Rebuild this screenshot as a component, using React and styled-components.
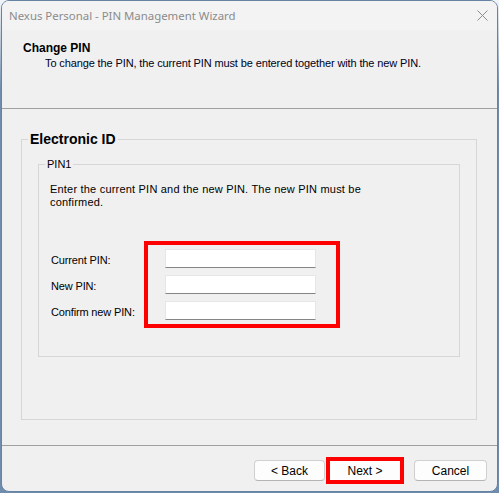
import React from 'react';
import styled, { createGlobalStyle } from 'styled-components';

const Global = createGlobalStyle`
  html, body { margin: 0; padding: 0; }
  body {
    width: 499px;
    height: 493px;
    overflow: hidden;
    background: linear-gradient(#f2f5f8 0px, #c9d5e1 30px, #6f8cad 90px);
  }
  #root { width: 499px; height: 493px; }
`;

const Window = styled.div`
  box-sizing: border-box;
  margin-left: 1px;
  width: 497px;
  height: 492px;
  border: 1px solid #6683a3;
  border-radius: 8px;
  background: #f0f0f0;
  overflow: hidden;
  display: flex;
  flex-direction: column;
  font-family: "Liberation Sans", Arial, sans-serif;
  color: #000;
`;

const TitleBar = styled.div`
  flex: none;
  height: 29px;
  display: flex;
  align-items: center;
  justify-content: space-between;
  padding-left: 7px;
  background: #f3f3f3;
  font-family: "Noto Sans", "Open Sans", sans-serif;
  font-size: 11.4px;
  color: #8b8b8b;
`;

const CloseButton = styled.div`
  width: 30px;
  height: 29px;
  display: flex;
  align-items: center;
  justify-content: center;
`;

const Header = styled.div`
  flex: none;
  box-sizing: border-box;
  height: 79px;
  padding: 11px 0 0 21px;
  border-bottom: 1px solid #a0a0a0;
`;

const HeaderTitle = styled.div`
  font-size: 12px;
  font-weight: bold;
  line-height: 14px;
`;

const HeaderText = styled.div`
  margin-top: 2px;
  padding-left: 22px;
  font-size: 11px;
  line-height: 13px;
  letter-spacing: -0.12px;
  color: #000018;
`;

const Body = styled.div`
  flex: 1;
  padding-top: 22px;
`;

const Group = styled.fieldset`
  box-sizing: border-box;
  margin: ${(p) => p.$margin};
  padding: 0;
  height: ${(p) => p.$height}px;
  ${(p) => (p.$width ? `width: ${p.$width}px;` : '')}
  border: 1px solid #d6d6d6;
  min-inline-size: 0;
`;

const Legend = styled.legend`
  margin-left: 6px;
  padding: 0 2px;
  font-size: ${(p) => (p.$big ? 14 : 11)}px;
  font-weight: ${(p) => (p.$big ? 'bold' : 'normal')};
  line-height: ${(p) => (p.$big ? 16 : 14)}px;
`;

const Description = styled.p`
  margin: 12px 0 0 11px;
  max-width: 330px;
  font-size: 11px;
  line-height: 13px;
  letter-spacing: 0.2px;
`;

const FieldsRow = styled.div`
  display: flex;
  margin-top: 32px;
  padding-left: 12px;
`;

const Labels = styled.div`
  width: 93px;
  padding-top: 10px;
  display: flex;
  flex-direction: column;
  gap: 7px;
`;

const Label = styled.div`
  height: 19px;
  font-size: 11px;
  line-height: 19px;
  letter-spacing: -0.15px;
`;

const Highlight = styled.div`
  border: 4px solid #ff0000;
  padding: 4px 20px 4px 17px;
  display: flex;
  flex-direction: column;
  gap: 7px;
`;

const Input = styled.div`
  box-sizing: border-box;
  width: 151px;
  height: 19px;
  background: #fff;
  border: 1px solid #e6e6e6;
  border-bottom-color: #858585;
`;

const Footer = styled.div`
  flex: none;
  box-sizing: border-box;
  height: 46px;
  border-top: 1px solid #a0a0a0;
  display: flex;
  justify-content: flex-end;
  align-items: flex-start;
  padding: 11px 10px 0 0;
`;

const Button = styled.div`
  box-sizing: border-box;
  width: ${(p) => p.$w}px;
  height: ${(p) => (p.$highlight ? 27 : 21)}px;
  margin-top: ${(p) => (p.$highlight ? 0 : 3)}px;
  margin-right: ${(p) => p.$mr || 0}px;
  display: flex;
  align-items: center;
  justify-content: center;
  background: #fdfdfd;
  border: ${(p) => (p.$highlight ? '4px solid #ff0000' : '1px solid #d0d0d0')};
  ${(p) => (p.$highlight ? '' : 'border-bottom-color: #b4b4b4;')}
  border-radius: ${(p) => (p.$highlight ? 0 : 4)}px;
  font-size: 12px;
  color: #000;
`;

export default function App() {
  return (
    <>
      <Global />
      <Window>
        <TitleBar>
          <span>Nexus Personal - PIN Management Wizard</span>
          <CloseButton>
            <svg width="11" height="11" viewBox="0 0 11 11">
              <path d="M0.5 0.5 L10.5 10.5 M10.5 0.5 L0.5 10.5" stroke="#8b8b8b" strokeWidth="1" fill="none" />
            </svg>
          </CloseButton>
        </TitleBar>
        <Header>
          <HeaderTitle>Change PIN</HeaderTitle>
          <HeaderText>To change the PIN, the current PIN must be entered together with the new PIN.</HeaderText>
        </Header>
        <Body>
          <Group $margin="0 0 0 19px" $width={456} $height={289}>
            <Legend $big>Electronic ID</Legend>
            <Group $margin="10px 16px 0 16px" $height={200}>
              <Legend>PIN1</Legend>
              <Description>
                Enter the current PIN and the new PIN. The new PIN must be confirmed.
              </Description>
              <FieldsRow>
                <Labels>
                  <Label>Current PIN:</Label>
                  <Label>New PIN:</Label>
                  <Label>Confirm new PIN:</Label>
                </Labels>
                <Highlight>
                  <Input />
                  <Input />
                  <Input />
                </Highlight>
              </FieldsRow>
            </Group>
          </Group>
        </Body>
        <Footer>
          <Button $w={71} $mr={1}>&lt; Back</Button>
          <Button $w={78} $mr={10} $highlight>Next &gt;</Button>
          <Button $w={73}>Cancel</Button>
        </Footer>
      </Window>
    </>
  );
}
